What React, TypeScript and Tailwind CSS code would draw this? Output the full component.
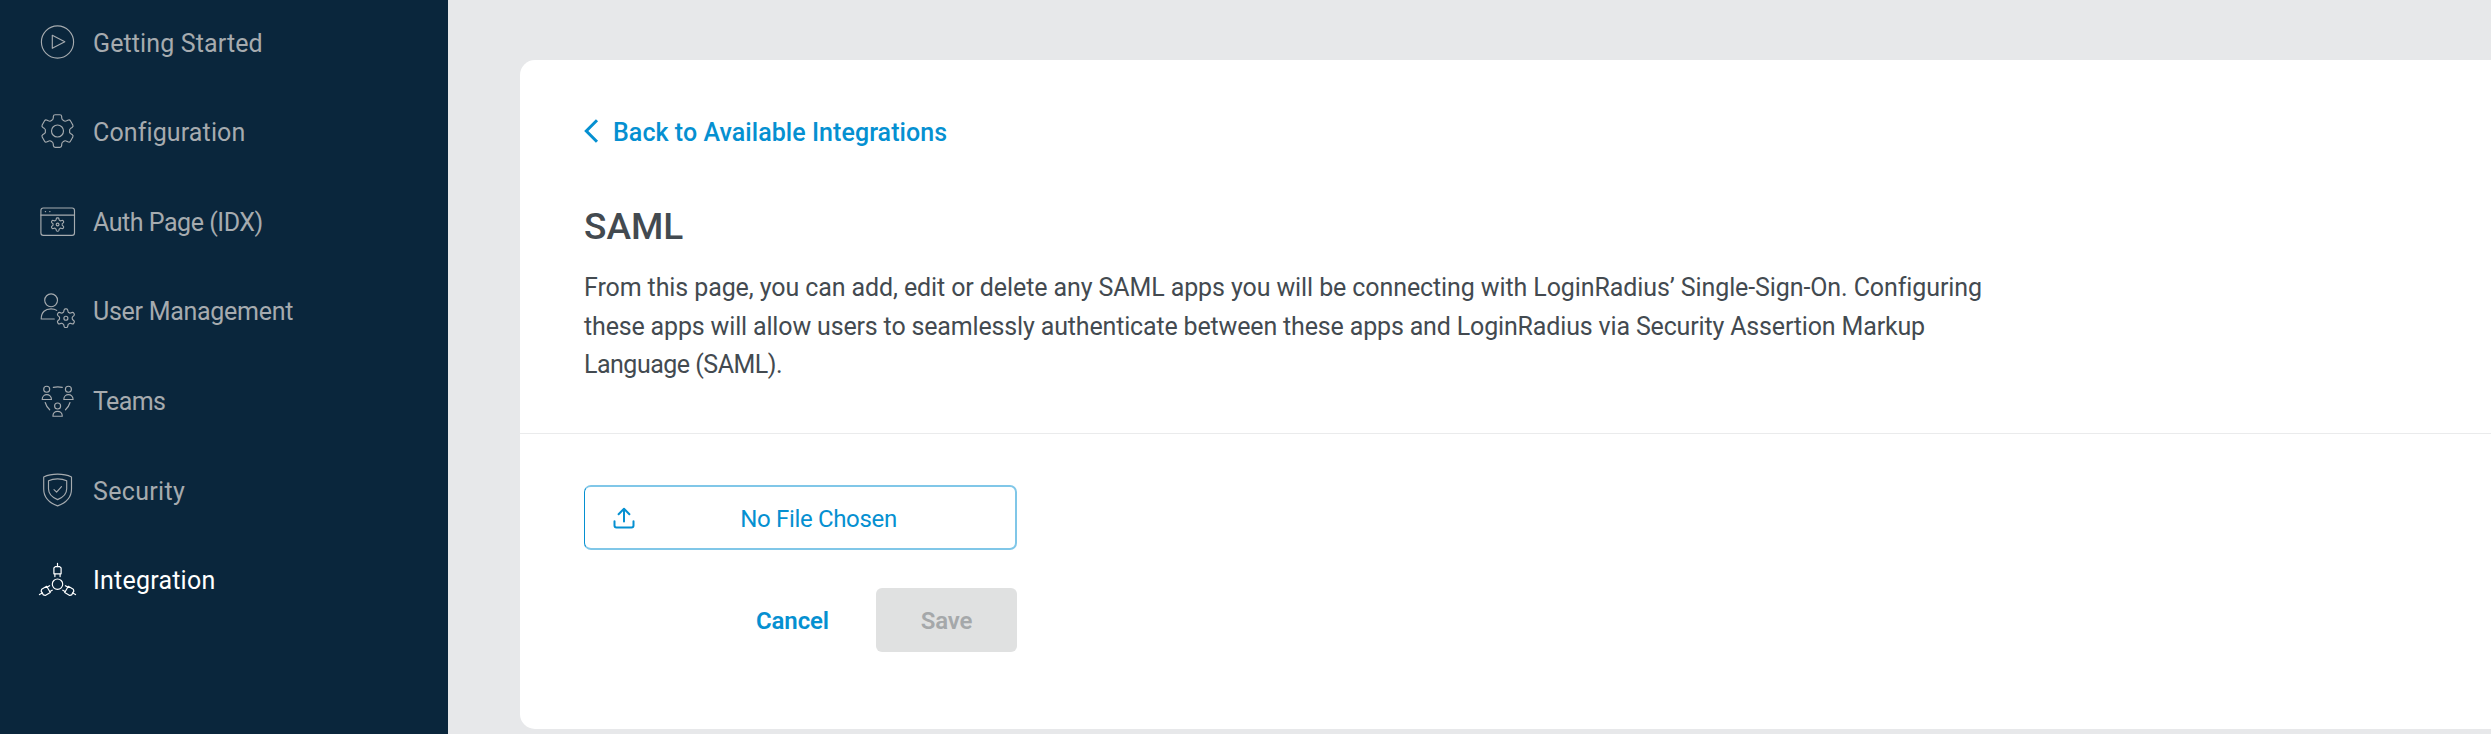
import type { ReactNode } from "react";

type Point = [number, number];

/** Builds a closed six-tooth gear outline around (cx, cy). */
function gearPath(cx: number, cy: number, tooth: Point[]): string {
  let d = "";
  for (let i = 0; i < 6; i++) {
    const a = (i * Math.PI) / 3;
    const p = tooth.map(([x, y]) => {
      const rx = cx + x * Math.cos(a) - y * Math.sin(a);
      const ry = cy + x * Math.sin(a) + y * Math.cos(a);
      return `${rx.toFixed(2)} ${ry.toFixed(2)}`;
    });
    d += `${i === 0 ? "M" : "L"}${p[0]} Q${p[1]} ${p[2]} L${p[3]} Q${p[4]} ${p[5]} L${p[6]} Q${p[7]} ${p[8]} L${p[9]} Q${p[10]} ${p[11]} `;
  }
  return d + "Z";
}

const wideTooth: Point[] = [
  [-6.6, -10.2], [-4.3, -10.9], [-4.2, -13],
  [-4.2, -14.4], [-4, -16.3], [-2.4, -16.3],
  [2.4, -16.3], [4, -16.3], [4.2, -14.4],
  [4.2, -13], [4.3, -10.9], [6.6, -10.2],
];

const slimTooth: Point[] = [
  [-3.3, -5.5], [-2.3, -5.6], [-2.1, -6.7],
  [-1.9, -7.9], [-1.6, -9.3], [-0.6, -9.3],
  [0.6, -9.3], [1.6, -9.3], [1.9, -7.9],
  [2.1, -6.7], [2.3, -5.6], [3.3, -5.5],
];

const tinyTooth: Point[] = slimTooth.map(([x, y]) => [x * 0.72, y * 0.72]);

function NavIcon({ children }: { children: ReactNode }) {
  return (
    <svg
      viewBox="-20.5 -20 40 40"
      className="h-10 w-10 shrink-0 overflow-visible"
      fill="none"
      stroke="currentColor"
      strokeWidth="1.15"
      strokeLinecap="round"
      strokeLinejoin="round"
    >
      {children}
    </svg>
  );
}

function Plug({ angle }: { angle: number }) {
  return (
    <g transform={`rotate(${angle} 0 5.2)`} strokeWidth="1.2">
      <path d="M0 -15.6V-12.4M-2.6 -5V-2.4M2.6 -5V-2.4" />
      <path d="M-3.6 -5.2V-11L-2.2 -12.4H2.2L3.6 -11V-5.2Z" />
    </g>
  );
}

const navItems: { label: string; tracking: string; active?: boolean; icon: ReactNode }[] = [
  {
    label: "Getting Started",
    tracking: "tracking-[0.12px]",
    icon: (
      <>
        <circle r="16.1" />
        <path d="M-5.2 -6.7V6.3L7.3 -0.2Z" />
      </>
    ),
  },
  {
    label: "Configuration",
    tracking: "tracking-[0.12px]",
    icon: (
      <>
        <path d={gearPath(0, 0, wideTooth)} />
        <circle r="6" />
      </>
    ),
  },
  {
    label: "Auth Page (IDX)",
    tracking: "tracking-[-0.46px]",
    icon: (
      <>
        <rect x="-16.6" y="-13" width="33.6" height="27.4" rx="2.4" />
        <path d="M-16.6 -5.9H17M-12.2 -9.4H-11.9M-7.8 -9.4H-7.5" />
        <path d={gearPath(0.1, 3.5, tinyTooth)} />
        <circle cx="0.1" cy="3.5" r="1.4" />
      </>
    ),
  },
  {
    label: "User Management",
    tracking: "tracking-[-0.28px]",
    icon: (
      <>
        <circle cx="-6.4" cy="-10.7" r="6.4" />
        <path d="M-3.2 8H-16.3C-16.3 1 -12 -2.2 -6.5 -2.2C-4 -2.2 -2 -1.5 -0.8 -0.6" />
        <path d={gearPath(8.4, 7.2, slimTooth)} />
        <circle cx="8.4" cy="7.2" r="2" />
      </>
    ),
  },
  {
    label: "Teams",
    tracking: "tracking-[-0.6px]",
    icon: (
      <>
        <circle cx="-10.8" cy="-10.8" r="3" />
        <circle cx="10.9" cy="-10.8" r="3" />
        <circle cx="0.1" cy="6" r="3" />
        <path d="M-15.3 -0.5C-15.3 -7 -6 -7 -6 -0.5Z" />
        <path d="M6.3 -0.5C6.3 -7 15.6 -7 15.6 -0.5Z" />
        <path d="M-4.6 16.2C-4.6 9.7 4.8 9.7 4.8 16.2Z" />
        <path d="M-4.2 -12.6Q0.3 -13.6 4.8 -12.6M-12.3 2.5Q-11 7 -7.8 9.8M12.5 2.5Q11.2 7 8 9.8" />
      </>
    ),
  },
  {
    label: "Security",
    tracking: "tracking-[0.32px]",
    icon: (
      <>
        <path d="M0.1 -15.9C5 -15.9 10 -15 14 -13.1V-1C14 8 8 13 0.1 15.9C-7.8 13 -13.8 8 -13.8 -1V-13.1C-9.8 -15 -4.8 -15.9 0.1 -15.9Z" />
        <path d="M0.1 -11.1C3.5 -11.1 6.5 -10.5 9.2 -9.2V-1.2C9.2 4.5 5.5 7.5 0.1 9.6C-5.3 7.5 -9 4.5 -9 -1.2V-9.2C-6.3 -10.5 -3.3 -11.1 0.1 -11.1Z" />
        <path d="M-3.5 -0.3L-0.9 2.2L4 -3.3" />
      </>
    ),
  },
  {
    label: "Integration",
    tracking: "tracking-[0.22px]",
    active: true,
    icon: (
      <>
        <circle cy="5.2" r="5.2" />
        <Plug angle={0} />
        <Plug angle={120} />
        <Plug angle={-120} />
      </>
    ),
  },
];

function Sidebar() {
  return (
    <aside className="w-[448px] shrink-0 overflow-hidden bg-[#0a263c]">
      <nav className="-mt-[3px] flex flex-col">
        {navItems.map((item) => (
          <a
            key={item.label}
            className={`flex h-[89.6px] items-center gap-4 pl-[37px] ${item.active ? "text-white" : "text-[#a6abaf]"}`}
          >
            <NavIcon>{item.icon}</NavIcon>
            <span className={`whitespace-nowrap pt-[3px] text-[25px] ${item.tracking}`}>{item.label}</span>
          </a>
        ))}
      </nav>
    </aside>
  );
}

export default function App() {
  return (
    <div className="flex h-[734px] w-full overflow-hidden bg-[#e7e8ea] font-['Roboto',sans-serif] text-[25px] text-[#434a50]">
      <Sidebar />
      <main className="min-w-0 flex-1 pl-[72px] pt-[60px]">
        <section className="h-[669px] rounded-l-[15px] bg-white">
          <header className="h-[374px] border-b border-[#eaebec] px-16 pt-[51px]">
            <a className="flex h-10 items-center text-[#0590d1]">
              <svg
                viewBox="0 0 16 24"
                className="mr-[13px] h-6 w-4 shrink-0"
                fill="none"
                stroke="currentColor"
                strokeWidth="3"
              >
                <path d="M13 1.2L2.3 12L13 22.8" />
              </svg>
              <span className="whitespace-nowrap pt-1 font-[550] tracking-[0.06px]">Back to Available Integrations</span>
            </a>
            <h1 className="mt-[51px] h-[50px] text-[37px] font-[550] leading-[50px]">SAML</h1>
            <p className="mt-[17px] flex flex-col whitespace-nowrap leading-[38.6px]">
              <span className="tracking-[-0.1px]">
                From this page, you can add, edit or delete any SAML apps you will be connecting with LoginRadius’
                Single-Sign-On. Configuring
              </span>
              <span className="tracking-[-0.16px]">
                these apps will allow users to seamlessly authenticate between these apps and LoginRadius via Security
                Assertion Markup
              </span>
              <span className="tracking-[-0.5px]">Language (SAML).</span>
            </p>
          </header>
          <form className="ml-16 flex w-[433px] flex-col pt-[51px] text-[24px]">
            <label className="flex h-[65px] items-center rounded-[7px] border-2 border-l border-[#80c7e8] border-l-[#0590d1] pl-7 text-[#0590d1]">
              <svg
                viewBox="0 0 22 22"
                className="h-[22px] w-[22px] shrink-0"
                fill="none"
                stroke="currentColor"
                strokeWidth="2"
                strokeLinecap="round"
                strokeLinejoin="round"
              >
                <path d="M11 14.5V2M5.6 7.2L11 1.8L16.4 7.2" />
                <path d="M1.5 14.3V18.6Q1.5 20.6 3.5 20.6H18.5Q20.5 20.6 20.5 18.6V14.3" />
              </svg>
              <span className="flex-1 whitespace-nowrap pl-[41px] pr-[54px] pt-[2px] text-center tracking-[-0.33px]">
                No File Chosen
              </span>
            </label>
            <div className="mt-[38px] flex h-16 items-stretch justify-end">
              <button type="button" className="mr-[47px] pt-[2px] font-semibold tracking-[-0.1px] text-[#0590d1]">
                Cancel
              </button>
              <button
                type="button"
                disabled
                className="w-[141px] rounded-[6px] bg-[#e0e1e1] pt-[2px] font-semibold tracking-[-0.2px] text-[#a5a8aa]"
              >
                Save
              </button>
            </div>
          </form>
        </section>
      </main>
    </div>
  );
}
